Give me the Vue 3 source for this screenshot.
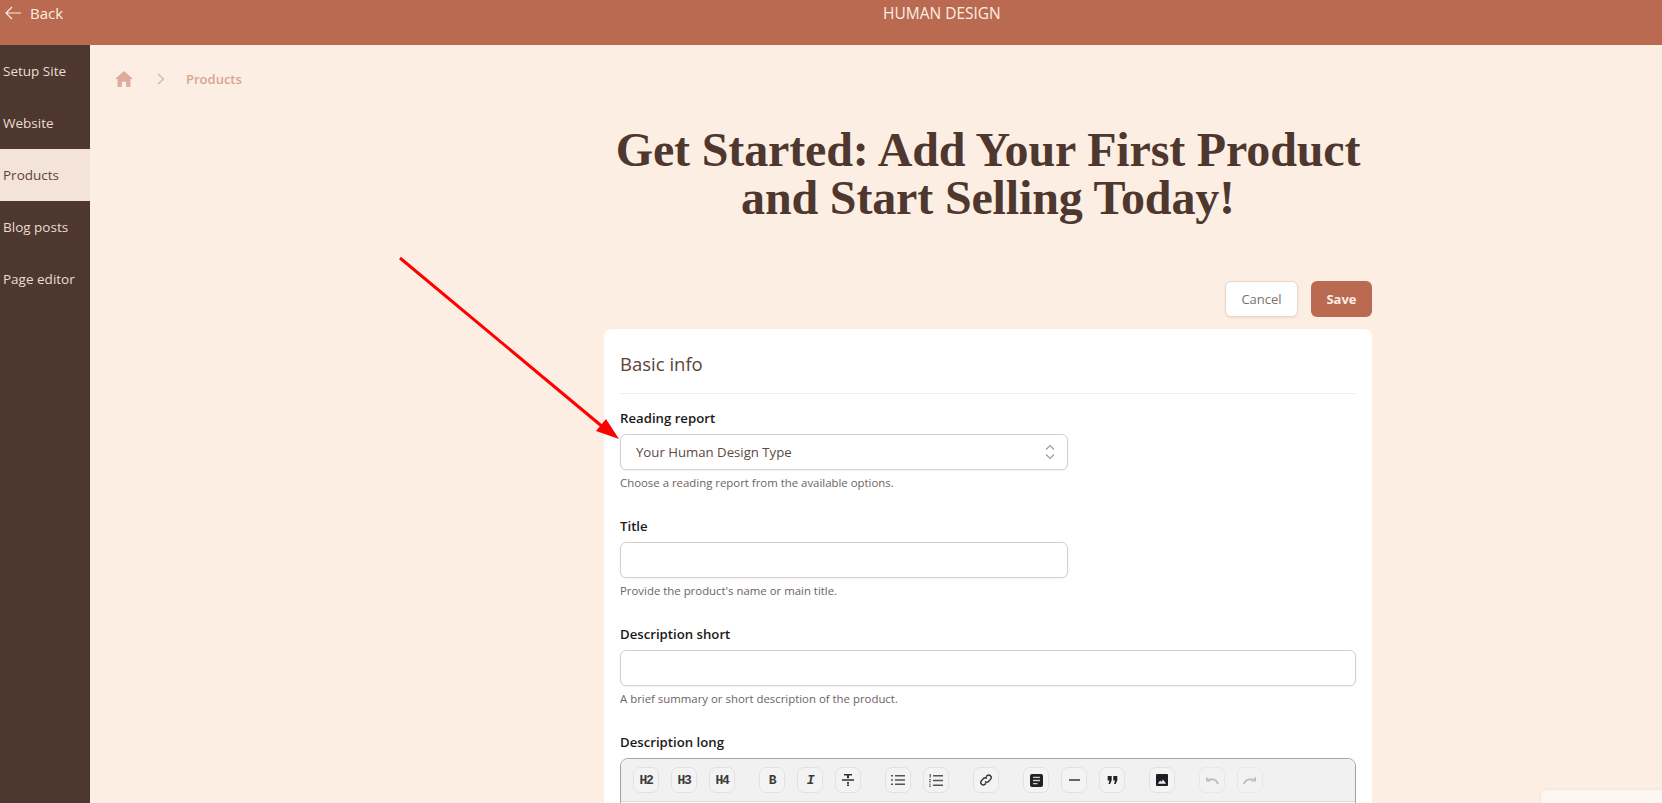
<template>
  <div class="page">
    <header class="topbar">
      <a class="back">
        <svg width="16" height="14" viewBox="0 0 16 14" fill="none" stroke="currentColor" stroke-width="1.2">
          <path d="M16 7H1M7 1L1 7l6 6" />
        </svg>
        Back
      </a>
      <div class="brand">HUMAN DESIGN</div>
    </header>

    <div class="body">
      <nav class="sidebar">
        <a v-for="item in navItems" :key="item" class="nav-item" :class="{ active: item === 'Products' }">{{ item }}</a>
      </nav>

      <main class="main">
        <div class="crumbs">
          <svg width="18" height="16" viewBox="0 0 18 16" fill="currentColor">
            <path d="M9 0L0 8h2.6v8h4.3v-5.2h4.2V16h4.3V8H18z" />
          </svg>
          <svg class="chev" width="8" height="12" viewBox="0 0 8 12" fill="none" stroke="currentColor" stroke-width="1.3">
            <path d="M1 1l5.5 5L1 11" />
          </svg>
          <span class="crumb-text">Products</span>
        </div>

        <div class="content">
          <h1>Get Started: Add Your First Product<br />and Start Selling Today!</h1>

          <div class="actions">
            <button class="btn cancel">Cancel</button>
            <button class="btn save">Save</button>
          </div>

          <section class="card">
            <h2>Basic info</h2>

            <div class="field">
              <label>Reading report</label>
              <div class="control half select">
                Your Human Design Type
                <svg width="10" height="16" viewBox="0 0 10 16" fill="none" stroke="#a09a96" stroke-width="1.2">
                  <path d="M1 5.5L5 1.5l4 4M1 10.5l4 4 4-4" />
                </svg>
              </div>
              <p class="help">Choose a reading report from the available options.</p>
            </div>

            <div class="field">
              <label>Title</label>
              <div class="control half"></div>
              <p class="help">Provide the product's name or main title.</p>
            </div>

            <div class="field">
              <label>Description short</label>
              <div class="control"></div>
              <p class="help">A brief summary or short description of the product.</p>
            </div>

            <div class="field">
              <label>Description long</label>
              <div class="editor">
                <div class="toolbar">
                  <div class="group">
                    <button class="tool txt">H2</button>
                    <button class="tool txt">H3</button>
                    <button class="tool txt">H4</button>
                  </div>
                  <div class="group">
                    <button class="tool txt">B</button>
                    <button class="tool txt ital">I</button>
                    <button class="tool">
                      <svg width="14" height="14" viewBox="0 0 14 14" fill="#333">
                        <path d="M3 1h8v1.6H3zM6 2.6h2v2.6H6zM1 6.3h12v1.4H1zM6 9h2v1.8H6zM6 11.6h2V13H6z" />
                      </svg>
                    </button>
                  </div>
                  <div class="group">
                    <button class="tool">
                      <svg width="14" height="12" viewBox="0 0 14 12" fill="#555">
                        <path d="M0 1h2v1.5H0zM4 1h10v1.5H4zM0 5.2h2v1.5H0zM4 5.2h10v1.5H4zM0 9.5h2V11H0zM4 9.5h10V11H4z" />
                      </svg>
                    </button>
                    <button class="tool">
                      <svg width="14" height="13" viewBox="0 0 14 13" fill="#555">
                        <path d="M4 1h10v1.5H4zM4 5.7h10v1.5H4zM4 10.4h10v1.5H4zM.6 0h1.2v3.4H.6zM0 5.2h2v1H0zM0 7.2h2v1H0zM0 9.7h2v.8H0zM0 11.8h2v.9H0z" />
                      </svg>
                    </button>
                  </div>
                  <div class="group">
                    <button class="tool">
                      <svg width="14" height="14" viewBox="0 0 14 14" fill="none" stroke="#333" stroke-width="1.4">
                        <path d="M6 8.5a2.4 2.4 0 0 0 3.5 0l2.2-2.4a2.5 2.5 0 0 0-3.5-3.5L7 3.8" />
                        <path d="M8 5.5a2.4 2.4 0 0 0-3.5 0L2.3 7.9a2.5 2.5 0 0 0 3.5 3.5L7 10.2" />
                      </svg>
                    </button>
                  </div>
                  <div class="group">
                    <button class="tool">
                      <svg width="13" height="13" viewBox="0 0 13 13">
                        <rect width="13" height="13" rx="2" fill="#222" />
                        <path d="M3 3.4h7M3 6.5h7M3 9.6h4.5" stroke="#ccc" stroke-width="1.3" />
                      </svg>
                    </button>
                    <button class="tool">
                      <svg width="11" height="2" viewBox="0 0 11 2"><rect width="11" height="2" fill="#666" /></svg>
                    </button>
                    <button class="tool">
                      <svg width="11" height="8" viewBox="0 0 12 10" fill="#222">
                        <path d="M0 0h5v5.2L3 10H1l1.2-4.5H0zM7 0h5v5.2L10 10H8l1.2-4.5H7z" />
                      </svg>
                    </button>
                  </div>
                  <div class="group">
                    <button class="tool">
                      <svg width="12" height="12" viewBox="0 0 13 13">
                        <rect width="13" height="13" rx="1" fill="#1c1c24" />
                        <path d="M2 10.5l2.5-3.5 1.4 1.8L7.5 6l3.5 4.5z" fill="#eee" />
                      </svg>
                    </button>
                  </div>
                  <div class="group off">
                    <button class="tool">
                      <svg width="14" height="10" viewBox="0 0 14 10" fill="none" stroke="#999" stroke-width="2">
                        <path d="M13 9C11.5 4.5 7 3 2.5 5.5" />
                        <path d="M1 1.5v5h5" fill="#999" stroke="none" />
                      </svg>
                    </button>
                    <button class="tool">
                      <svg width="14" height="10" viewBox="0 0 14 10" fill="none" stroke="#999" stroke-width="2">
                        <path d="M1 9C2.5 4.5 7 3 11.5 5.5" />
                        <path d="M13 1.5v5H8" fill="#999" stroke="none" />
                      </svg>
                    </button>
                  </div>
                </div>
                <div class="editor-body"></div>
              </div>
            </div>
          </section>
        </div>
      </main>
    </div>

    <!-- red annotation arrow over the page -->
    <svg class="arrow" width="1662" height="803" viewBox="0 0 1662 803">
      <path d="M400 258L604 428" stroke="#f00" stroke-width="3" fill="none" />
      <path d="M619 439L596 431L606 419z" fill="#f00" />
    </svg>

    <div class="corner"></div>
  </div>
</template>

<script setup>
const navItems = ['Setup Site', 'Website', 'Products', 'Blog posts', 'Page editor']
</script>

<style>
html, body {
  margin: 0;
  background: #fceee3;
}
</style>

<style scoped>
.page {
  position: relative;
  height: 803px;
  overflow: hidden;
  background: #fceee3;
  font-family: "Open Sans", "Noto Sans", sans-serif;
  color: #4e372e;
}

.topbar {
  height: 45px;
  background: #b96a50;
  color: #fdeee3;
  display: flex;
  align-items: flex-start;
  box-sizing: border-box;
  padding: 3px 0 0 5px;
  line-height: 20px;
}

.back {
  display: flex;
  align-items: center;
  gap: 9px;
  width: 878px;
  font-size: 15px;
}

.brand {
  font-size: 15.5px;
}

.body {
  display: flex;
}

.sidebar {
  width: 90px;
  height: 758px;
  flex: none;
  background: #4e372e;
  display: flex;
  flex-direction: column;
}

.nav-item {
  height: 52px;
  display: flex;
  align-items: center;
  padding-left: 3px;
  font-size: 13.5px;
  color: #ecdcd1;
}

.nav-item.active {
  background: #f3e3d9;
  color: #5b4238;
}

.main {
  flex: 1;
  min-width: 0;
}

.crumbs {
  display: flex;
  align-items: center;
  height: 24px;
  padding: 22px 0 0 25px;
  color: #dfac9b;
}

.chev {
  margin-left: 24px;
  color: #d9b3a5;
}

.crumb-text {
  margin-left: 21px;
  font-size: 13px;
  font-weight: 600;
  color: #d8a593;
}

.content {
  width: 768px;
  margin-left: 514px;
}

h1 {
  margin: 35px -20px 0;
  white-space: nowrap;
  text-align: center;
  font-family: "Liberation Serif", serif;
  font-size: 48px;
  line-height: 48px;
  font-weight: 700;
  letter-spacing: -0.15px;
  color: #4e372e;
}

.actions {
  display: flex;
  justify-content: flex-end;
  gap: 13px;
  margin-top: 59px;
}

.btn {
  height: 36px;
  border-radius: 6px;
  font-family: inherit;
  font-size: 13px;
  box-sizing: border-box;
}

.cancel {
  width: 73px;
  background: #fff;
  border: 1px solid #e6d8ce;
  font-weight: 500;
  color: #78716f;
  box-shadow: 0 1px 2px rgba(78, 55, 46, 0.1);
}

.save {
  width: 61px;
  background: #b96a50;
  border: 0;
  font-weight: 700;
  color: #fdeee3;
}

.card {
  margin-top: 12px;
  background: #fff;
  border-radius: 8px;
  padding: 0 16px;
  height: 520px;
}

h2 {
  margin: 0 1px 0 0;
  height: 64px;
  line-height: 70px;
  font-size: 18.5px;
  font-weight: 400;
  color: #5b4238;
  border-bottom: 1px solid #efebe8;
}

.field {
  margin-bottom: 25px;
}

.field:first-of-type {
  margin-top: 14px;
}

label {
  display: block;
  height: 26px;
  line-height: 20px;
  font-size: 13.2px;
  font-weight: 600;
  color: #1c1917;
}

.control {
  height: 36px;
  box-sizing: border-box;
  border: 1px solid #d9cec6;
  border-radius: 6px;
  background: #fff;
  box-shadow: 0 1px 2px rgba(0, 0, 0, 0.05);
}

.half {
  width: 448px;
}

.select {
  display: flex;
  align-items: center;
  justify-content: space-between;
  padding: 0 12px 0 15px;
  font-size: 13.2px;
  color: #5b4a42;
}

.help {
  margin: 5px 0 0;
  height: 16px;
  line-height: 16px;
  font-size: 11.4px;
  color: #6b6462;
}

.editor {
  border: 1px solid #a3a3a3;
  border-radius: 8px 8px 0 0;
  overflow: hidden;
}

.toolbar {
  display: flex;
  gap: 24px;
  padding: 8px 12px;
  background: #f1f1f1;
  border-bottom: 1px solid #dcdcdc;
}

.editor-body {
  height: 40px;
  background: #fff;
}

.group {
  display: flex;
  gap: 12px;
}

.group.off {
  opacity: 0.55;
}

.tool {
  width: 26px;
  height: 26px;
  padding: 0;
  display: flex;
  align-items: center;
  justify-content: center;
  border: 1px solid #e2e2e2;
  border-radius: 7px;
  background: #f3f3f3;
  font-family: "Liberation Mono", monospace;
  font-size: 13px;
  letter-spacing: -1.2px;
  color: #3a3a3a;
}

.txt {
  font-weight: 700;
}

.ital {
  font-style: italic;
}

.arrow {
  position: absolute;
  top: 0;
  left: 0;
  pointer-events: none;
}

.corner {
  position: absolute;
  right: 0;
  bottom: -10px;
  width: 121px;
  height: 23px;
  background: #fdf6f1;
  border-radius: 6px 0 0 0;
  box-shadow: 0 0 3px rgba(120, 90, 70, 0.12);
}
</style>
